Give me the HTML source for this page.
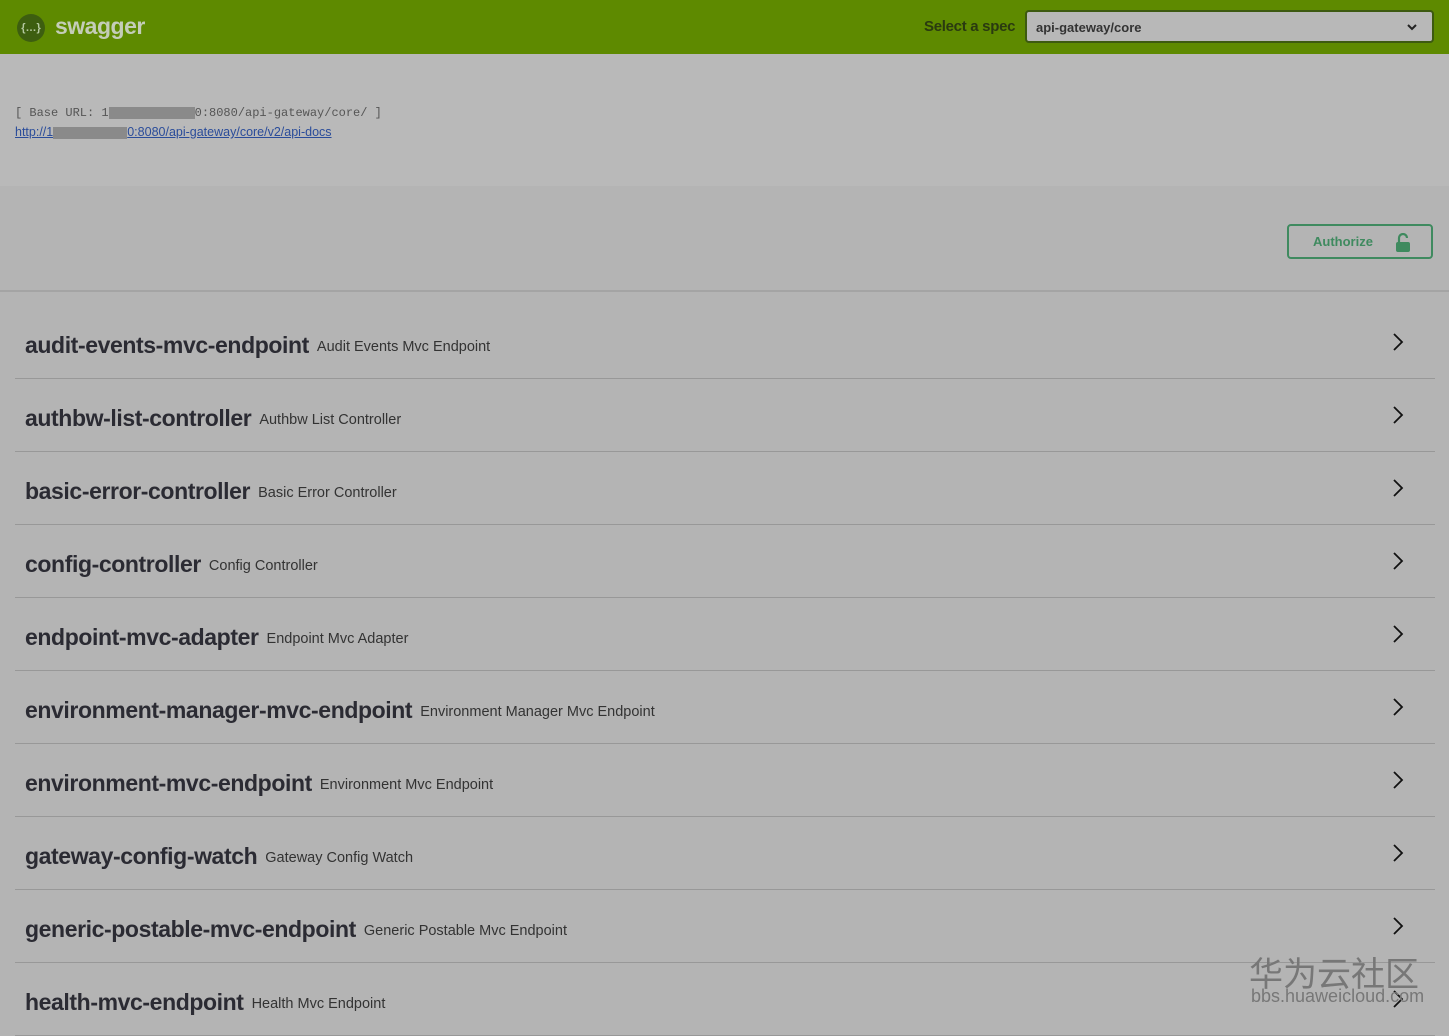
<!DOCTYPE html>
<html><head><meta charset="utf-8"><style>
*{margin:0;padding:0;box-sizing:border-box}
body{width:1449px;height:1033px;overflow:hidden;background:#b4b4b4;font-family:"Liberation Sans",sans-serif;color:#222;position:relative}
.top{height:54px;background:#5e8a00;position:relative}
.logo{position:absolute;left:17px;top:14px;width:28px;height:28px;border-radius:50%;background:#3d5e10;color:#b4c8a0;font-size:11px;text-align:center;line-height:28px;font-weight:bold}
.brand{position:absolute;left:55px;top:13px;font-size:23px;font-weight:bold;color:#c4cdb8;letter-spacing:-0.5px}
.sel-l{position:absolute;left:924px;top:18px;font-size:15px;font-weight:bold;color:#2a3a10;letter-spacing:-0.3px}
.sel{position:absolute;left:1025px;top:10px;width:409px;height:33px;border:2px solid #3d5a10;border-radius:4px;background:#b8b8b8;font-size:13px;font-weight:bold;padding:8px 9px;color:#333}
.sel svg{position:absolute;right:14px;top:11px}
.info{height:132px;background:#b9b9b9;padding-top:52px;padding-left:15px}
.base{font-family:"Liberation Mono",monospace;font-size:12px;color:#555}
.lnk{font-size:12.5px;color:#2a4c9a;text-decoration:underline;margin-top:5px}
.red{display:inline-block;background:#8a8a8a;height:12px;vertical-align:middle}
.auth{position:absolute;left:1287px;top:224px;width:146px;height:35px;border:2px solid #3f8a5f;border-radius:4px;color:#3f8a5f;font-weight:bold;font-size:13px;padding:8px 0 0 24px}
.auth svg{position:absolute;left:106px;top:7px}
.sep{position:absolute;left:0;top:290px;width:1449px;height:2px;background:#a4a4a4}
.row{position:absolute;left:15px;width:1420px;height:73px;border-bottom:1px solid #989898}
.row b{position:absolute;left:10px;top:26px;font-size:23px;letter-spacing:-0.4px;color:#2b2b33;white-space:nowrap}
.row b span{font-weight:normal;font-size:14.5px;letter-spacing:0;color:#333;margin-left:8px;vertical-align:2px}
.row svg{position:absolute;left:1376px;top:26px}
.wm{position:absolute;left:1249px;top:947px;color:#777;font-family:"Noto Sans CJK SC",sans-serif;font-size:34px;letter-spacing:0px}
.wm2{position:absolute;left:1251px;top:986px;color:#777;font-size:18px}
</style></head><body>
<div class="top">
<div class="logo">{…}</div><div class="brand">swagger</div>
<div class="sel-l">Select a spec</div>
<div class="sel">api-gateway/core<svg width="12" height="8" viewBox="0 0 12 8"><path d="M2 2l4 4 4-4" stroke="#222" stroke-width="2" fill="none"/></svg></div>
</div>
<div class="info">
<div class="base">[ Base URL: 1<span class="red" style="width:86px"></span>0:8080/api-gateway/core/ ]</div>
<div class="lnk">http://1<span class="red" style="width:74px"></span>0:8080/api-gateway/core/v2/api-docs</div>
</div>
<div class="auth">Authorize<svg width="16" height="20" viewBox="0 0 16 20"><path d="M4 9V5a4 4 0 0 1 8 0" stroke="#3f8a5f" stroke-width="2.2" fill="none"/><rect x="1" y="9" width="14" height="10" rx="2" fill="#3f8a5f"/></svg></div>
<div class="sep"></div>
<div class="row" style="top:306px"><b>audit-events-mvc-endpoint<span>Audit Events Mvc Endpoint</span></b><svg width="14" height="20"><path d="M3 2l8 8-8 8" stroke="#111" stroke-width="1.8" fill="none"/></svg></div>
<div class="row" style="top:379px"><b>authbw-list-controller<span>Authbw List Controller</span></b><svg width="14" height="20"><path d="M3 2l8 8-8 8" stroke="#111" stroke-width="1.8" fill="none"/></svg></div>
<div class="row" style="top:452px"><b>basic-error-controller<span>Basic Error Controller</span></b><svg width="14" height="20"><path d="M3 2l8 8-8 8" stroke="#111" stroke-width="1.8" fill="none"/></svg></div>
<div class="row" style="top:525px"><b>config-controller<span>Config Controller</span></b><svg width="14" height="20"><path d="M3 2l8 8-8 8" stroke="#111" stroke-width="1.8" fill="none"/></svg></div>
<div class="row" style="top:598px"><b>endpoint-mvc-adapter<span>Endpoint Mvc Adapter</span></b><svg width="14" height="20"><path d="M3 2l8 8-8 8" stroke="#111" stroke-width="1.8" fill="none"/></svg></div>
<div class="row" style="top:671px"><b>environment-manager-mvc-endpoint<span>Environment Manager Mvc Endpoint</span></b><svg width="14" height="20"><path d="M3 2l8 8-8 8" stroke="#111" stroke-width="1.8" fill="none"/></svg></div>
<div class="row" style="top:744px"><b>environment-mvc-endpoint<span>Environment Mvc Endpoint</span></b><svg width="14" height="20"><path d="M3 2l8 8-8 8" stroke="#111" stroke-width="1.8" fill="none"/></svg></div>
<div class="row" style="top:817px"><b>gateway-config-watch<span>Gateway Config Watch</span></b><svg width="14" height="20"><path d="M3 2l8 8-8 8" stroke="#111" stroke-width="1.8" fill="none"/></svg></div>
<div class="row" style="top:890px"><b>generic-postable-mvc-endpoint<span>Generic Postable Mvc Endpoint</span></b><svg width="14" height="20"><path d="M3 2l8 8-8 8" stroke="#111" stroke-width="1.8" fill="none"/></svg></div>
<div class="row" style="top:963px"><b>health-mvc-endpoint<span>Health Mvc Endpoint</span></b><svg width="14" height="20"><path d="M3 2l8 8-8 8" stroke="#111" stroke-width="1.8" fill="none"/></svg></div>
<div class="wm">华为云社区</div>
<div class="wm2">bbs.huaweicloud.com</div>
</body></html>
